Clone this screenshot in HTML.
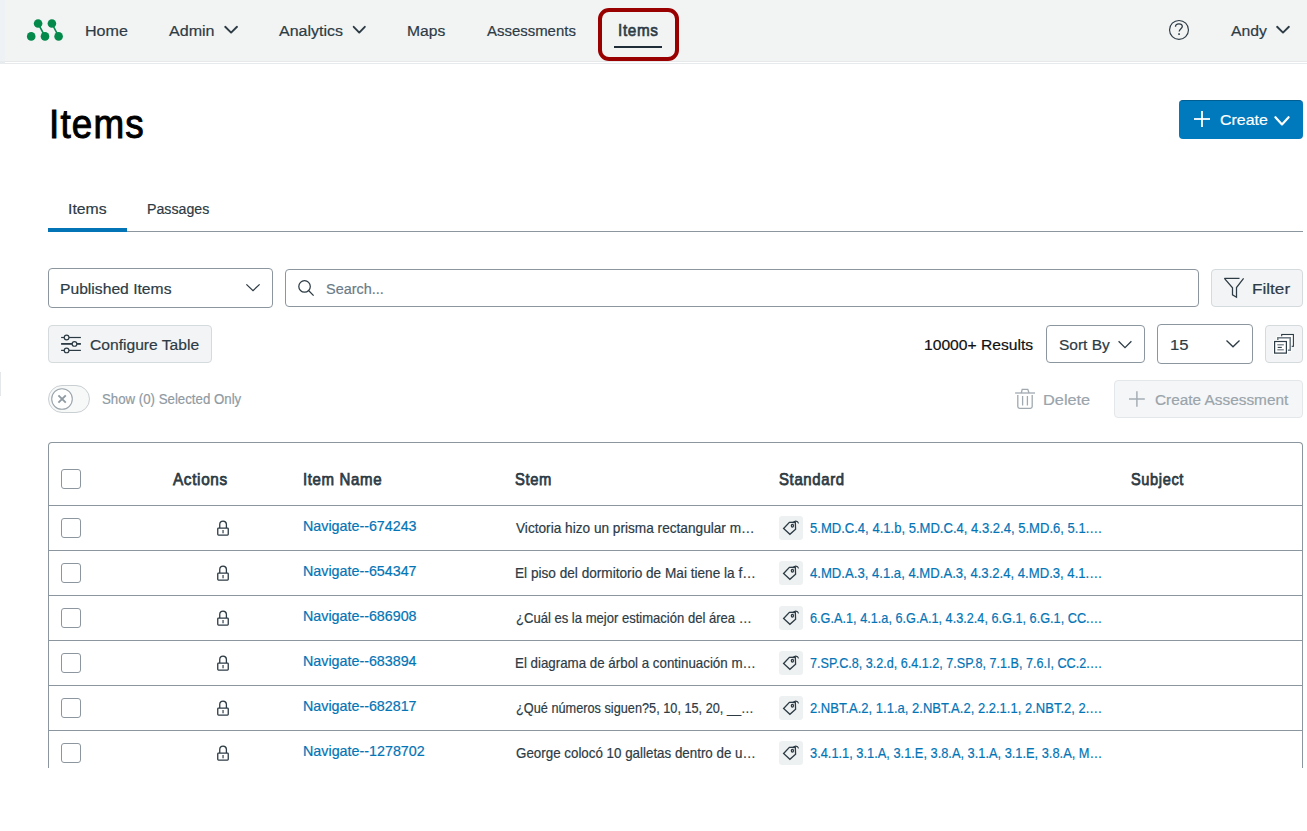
<!DOCTYPE html>
<html><head><meta charset="utf-8"><title>Items</title>
<style>
html,body{margin:0;padding:0;width:1307px;height:831px;overflow:hidden;background:#fff;}
body{position:relative;font-family:"Liberation Sans",sans-serif;}
.t{position:absolute;white-space:nowrap;line-height:1;transform-origin:0 0;font-family:"Liberation Sans",sans-serif;}
.r{position:absolute;box-sizing:border-box;}
svg.i{position:absolute;overflow:visible;}
</style></head><body>
<!-- header -->
<div class="r" style="left:0;top:0;width:1307px;height:61px;background:#f2f3f3"></div>
<div class="r" style="left:0;top:61px;width:1307px;height:1px;background:#e6e8ea"></div>
<div class="r" style="left:0;top:63px;width:1307px;height:1px;background:#e7eaed"></div>
<div class="r" style="left:0;top:0;width:5px;height:61px;background:#eef2f4"></div>
<div class="r" style="left:0;top:61px;width:5px;height:3px;background:#e8ecee"></div>
<svg class="i" style="left:0;top:0" width="70" height="60">
 <g fill="#038a4b" stroke="#038a4b" stroke-width="1.6">
  <line x1="38.1" y1="23.5" x2="45" y2="36.4"/><line x1="51.9" y1="23.5" x2="58.6" y2="36.4"/>
  <circle cx="31.2" cy="36.4" r="4.3" stroke="none"/><circle cx="38.1" cy="23.5" r="4.3" stroke="none"/>
  <circle cx="45" cy="36.4" r="4.3" stroke="none"/><circle cx="51.9" cy="23.5" r="4.3" stroke="none"/>
  <circle cx="58.6" cy="36.4" r="4.3" stroke="none"/>
 </g>
</svg>
<svg class="i" style="left:0;top:0" width="1307" height="60">
 <g fill="none" stroke="#2d3b45" stroke-width="1.9" stroke-linecap="round" stroke-linejoin="round">
  <polyline points="225.2,26.8 231.1,32.6 237,26.8"/>
  <polyline points="353.7,26.8 359.25,32.6 364.8,26.8"/>
  <polyline points="1277.1,26.8 1283,32.6 1288.9,26.8"/>
 </g>
 <g transform="translate(1165,16)" fill="none" stroke="#2d3b45">
  <circle cx="14" cy="13.9" r="9.45" stroke-width="1.15"/>
  <path d="M10.5,10.8 C10.5,8.9 12.1,7.9 13.9,7.9 C15.7,7.9 17.3,9 17.3,10.6 C17.3,12.5 14.2,13.1 14.2,15.6" stroke-width="1.3"/>
  <rect x="13.2" y="17.3" width="1.7" height="1.6" fill="#2d3b45" stroke="none"/>
 </g>
</svg>
<div class="r" style="left:598px;top:8px;width:81px;height:53px;border:4px solid #990000;border-radius:11px"></div>
<div class="r" style="left:614px;top:46px;width:48px;height:2px;background:#1f2d38"></div>

<!-- create button -->
<div class="r" style="left:1179px;top:100px;width:124px;height:39px;background:#0079bd;border-top:1px solid #005e92;border-radius:4px"></div>
<svg class="i" style="left:0;top:0" width="1307" height="140">
 <g fill="none" stroke="#fff" stroke-width="1.8">
  <line x1="1194" y1="119" x2="1210" y2="119"/><line x1="1202" y1="111" x2="1202" y2="127"/>
  <polyline points="1275.4,117.2 1282,124.4 1288.6,117.2" stroke-width="2.2" stroke-linecap="round" stroke-linejoin="round"/>
 </g>
</svg>

<!-- tabs -->
<div class="r" style="left:48px;top:231px;width:1255px;height:1px;background:#8b969e"></div>
<div class="r" style="left:48px;top:228px;width:79px;height:4px;background:#0374b5"></div>

<!-- controls row 1 -->
<div class="r" style="left:48px;top:268px;width:225px;height:40px;border:1px solid #8b969e;border-radius:4px;background:#fff"></div>
<div class="r" style="left:285px;top:269px;width:914px;height:38px;border:1px solid #8b969e;border-radius:4px;background:#fff"></div>
<div class="r" style="left:1211px;top:269px;width:92px;height:38px;border:1px solid #d5dadd;border-radius:4px;background:#f2f4f5"></div>
<svg class="i" style="left:0;top:0" width="1307" height="420">
 <g fill="none" stroke="#2d3b45" stroke-width="1.3">
  <polyline points="246.4,284.4 253,290.6 259.6,284.4"/>
 </g>
 <g fill="none" stroke="#2d3b45" stroke-width="1.25">
  <circle cx="304.55" cy="286.45" r="5.75"/>
  <line x1="308.8" y1="290.7" x2="313.6" y2="295.6"/>
  <polyline points="1224.4,278.4 1239.5,278.4"/>
  <polyline points="1224.4,278.4 1232.5,287.8 1232.5,294.9 1236.5,297.2 1236.5,287.5 1243.6,278.4" stroke-linejoin="miter"/>
 </g>
</svg>

<!-- controls row 2 -->
<div class="r" style="left:48px;top:325px;width:164px;height:38px;border:1px solid #d5dadd;border-radius:4px;background:#f2f4f5"></div>
<div class="r" style="left:1046px;top:325px;width:99px;height:38px;border:1px solid #8b969e;border-radius:4px;background:#fff"></div>
<div class="r" style="left:1157px;top:324px;width:96px;height:40px;border:1px solid #8b969e;border-radius:4px;background:#fff"></div>
<div class="r" style="left:1265px;top:325px;width:38px;height:38px;border:1px solid #d5dadd;border-radius:4px;background:#f2f4f5"></div>
<svg class="i" style="left:0;top:0" width="1307" height="420">
 <g fill="none" stroke="#2d3b45" stroke-width="1.3">
  <polyline points="1118.6,341.3 1125,347.6 1131.4,341.3"/>
  <polyline points="1226.5,340.5 1233,346.8 1239.5,340.5"/>
 </g>
 <g stroke="#2d3b45" stroke-width="1.2">
  <line x1="61.1" y1="337.5" x2="80.9" y2="337.5"/>
  <line x1="61.1" y1="343.9" x2="80.9" y2="343.9" stroke-width="1.8"/>
  <line x1="61.1" y1="350.4" x2="80.9" y2="350.4"/>
  <circle cx="66.6" cy="337.5" r="2.35" fill="#f2f4f5"/>
  <circle cx="74.5" cy="343.9" r="2.35" fill="#f2f4f5"/>
  <circle cx="66.6" cy="350.4" r="2.35" fill="#f2f4f5"/>
 </g>
 <g transform="translate(1266,326)">
  <rect x="15.7" y="8.5" width="11.7" height="11.8" fill="#fff" stroke="#2d3b45" stroke-width="1.1"/>
  <rect x="11.8" y="11.8" width="12.4" height="12.4" fill="#fff" stroke="#fff" stroke-width="3"/>
  <rect x="11.8" y="11.8" width="12.4" height="12.4" fill="#fff" stroke="#6b7780" stroke-width="1.5"/>
  <rect x="8.6" y="15.5" width="11.8" height="11.6" fill="#fff" stroke="#fff" stroke-width="3"/>
  <rect x="8.6" y="15.5" width="11.8" height="11.6" fill="#fff" stroke="#2d3b45" stroke-width="1.2"/>
  <line x1="11.3" y1="18.8" x2="17.8" y2="18.8" stroke="#6b7780" stroke-width="1.2"/>
  <line x1="11.7" y1="21.4" x2="15.8" y2="21.4" stroke="#2d3b45" stroke-width="1.1"/>
  <line x1="11.3" y1="23.8" x2="17.8" y2="23.8" stroke="#6b7780" stroke-width="1.2"/>
 </g>
</svg>

<!-- toggle + delete row -->
<div class="r" style="left:0;top:372px;width:1px;height:24px;background:#e4e8eb"></div>
<div class="r" style="left:48px;top:385px;width:42px;height:28px;border:1px solid #c9cfd3;border-radius:14px;background:#f7f8f8"></div>
<svg class="i" style="left:0;top:0" width="1307" height="420">
 <circle cx="62" cy="399" r="10.3" fill="#fff" stroke="#9aa4ab" stroke-width="1.1"/>
 <g stroke="#8f9aa2" stroke-width="1.9"><line x1="58.4" y1="395.4" x2="65.8" y2="402.6"/><line x1="65.8" y1="395.4" x2="58.4" y2="402.6"/></g>
 <g transform="translate(1008,382)" fill="none" stroke="#a0a9b0" stroke-width="1.3">
  <line x1="7.1" y1="11" x2="27" y2="11"/>
  <polyline points="13.3,11 14.2,7.4 19.8,7.4 21,11"/>
  <path d="M9.8,13.1 V24.5 Q9.8,26.3 11.6,26.3 H22.4 Q24.2,26.3 24.2,24.5 V13.1"/>
  <line x1="14.6" y1="14" x2="14.6" y2="23.5"/><line x1="19.4" y1="14" x2="19.4" y2="23.5"/>
 </g>
</svg>
<div class="r" style="left:1114px;top:380px;width:189px;height:38px;border:1px solid #e3e7e9;border-radius:4px;background:#f5f6f7"></div>
<svg class="i" style="left:0;top:0" width="1307" height="420">
 <g stroke="#a5aeb4" stroke-width="1.5"><line x1="1129" y1="399" x2="1144.8" y2="399"/><line x1="1136.9" y1="391.2" x2="1136.9" y2="406.7"/></g>
</svg>

<!-- table -->
<div class="r" style="left:48px;top:442px;width:1255px;height:326px;border:1px solid #8b969e;border-bottom:none;border-radius:4px 4px 0 0;background:#fff"></div>
<div class="r" style="left:48px;top:505px;width:1255px;height:1px;background:#8b969e"></div>
<div class="r" style="left:48px;top:550px;width:1255px;height:1px;background:#8b969e"></div>
<div class="r" style="left:48px;top:595px;width:1255px;height:1px;background:#8b969e"></div>
<div class="r" style="left:48px;top:640px;width:1255px;height:1px;background:#8b969e"></div>
<div class="r" style="left:48px;top:685px;width:1255px;height:1px;background:#8b969e"></div>
<div class="r" style="left:48px;top:730px;width:1255px;height:1px;background:#8b969e"></div>
<div class="r" style="left:61px;top:469px;width:20px;height:20px;border:1px solid #8b969e;border-radius:3px;background:#fff"></div>
<div class="r" style="left:61px;top:518px;width:20px;height:20px;border:1px solid #8b969e;border-radius:3px;background:#fff"></div>
<div class="r" style="left:779px;top:516px;width:24px;height:24px;border-radius:3px;background:#eef1f2"></div>
<svg class="i" style="left:210px;top:515px" width="26" height="26"><g fill="none" stroke="#2d3b45" stroke-width="1.3"><rect x="7.75" y="13.05" width="10.5" height="7.1" rx="0.8"/><path d="M9.75,13.05 V9.2 A3.33,3.33 0 0 1 16.4,9.2 V13.05"/></g><rect x="12.3" y="15" width="1.5" height="3.3" fill="#5b6770"/></svg>
<svg class="i" style="left:776px;top:513px" width="30" height="30"><g fill="none" stroke="#2d3b45" stroke-width="1.3" stroke-linejoin="miter"><path d="M7.6,15.5 L13.4,9.3 L19.3,9.1 L19.6,16.3 L13.9,21.3 Z"/><ellipse cx="16.4" cy="12.8" rx="1.05" ry="1.4"/><path d="M17.2,10.2 C17.6,7.6 21.6,7.2 22.6,10.3" stroke-width="1.1"/></g></svg>
<div class="r" style="left:61px;top:563px;width:20px;height:20px;border:1px solid #8b969e;border-radius:3px;background:#fff"></div>
<div class="r" style="left:779px;top:561px;width:24px;height:24px;border-radius:3px;background:#eef1f2"></div>
<svg class="i" style="left:210px;top:560px" width="26" height="26"><g fill="none" stroke="#2d3b45" stroke-width="1.3"><rect x="7.75" y="13.05" width="10.5" height="7.1" rx="0.8"/><path d="M9.75,13.05 V9.2 A3.33,3.33 0 0 1 16.4,9.2 V13.05"/></g><rect x="12.3" y="15" width="1.5" height="3.3" fill="#5b6770"/></svg>
<svg class="i" style="left:776px;top:558px" width="30" height="30"><g fill="none" stroke="#2d3b45" stroke-width="1.3" stroke-linejoin="miter"><path d="M7.6,15.5 L13.4,9.3 L19.3,9.1 L19.6,16.3 L13.9,21.3 Z"/><ellipse cx="16.4" cy="12.8" rx="1.05" ry="1.4"/><path d="M17.2,10.2 C17.6,7.6 21.6,7.2 22.6,10.3" stroke-width="1.1"/></g></svg>
<div class="r" style="left:61px;top:608px;width:20px;height:20px;border:1px solid #8b969e;border-radius:3px;background:#fff"></div>
<div class="r" style="left:779px;top:606px;width:24px;height:24px;border-radius:3px;background:#eef1f2"></div>
<svg class="i" style="left:210px;top:605px" width="26" height="26"><g fill="none" stroke="#2d3b45" stroke-width="1.3"><rect x="7.75" y="13.05" width="10.5" height="7.1" rx="0.8"/><path d="M9.75,13.05 V9.2 A3.33,3.33 0 0 1 16.4,9.2 V13.05"/></g><rect x="12.3" y="15" width="1.5" height="3.3" fill="#5b6770"/></svg>
<svg class="i" style="left:776px;top:603px" width="30" height="30"><g fill="none" stroke="#2d3b45" stroke-width="1.3" stroke-linejoin="miter"><path d="M7.6,15.5 L13.4,9.3 L19.3,9.1 L19.6,16.3 L13.9,21.3 Z"/><ellipse cx="16.4" cy="12.8" rx="1.05" ry="1.4"/><path d="M17.2,10.2 C17.6,7.6 21.6,7.2 22.6,10.3" stroke-width="1.1"/></g></svg>
<div class="r" style="left:61px;top:653px;width:20px;height:20px;border:1px solid #8b969e;border-radius:3px;background:#fff"></div>
<div class="r" style="left:779px;top:651px;width:24px;height:24px;border-radius:3px;background:#eef1f2"></div>
<svg class="i" style="left:210px;top:650px" width="26" height="26"><g fill="none" stroke="#2d3b45" stroke-width="1.3"><rect x="7.75" y="13.05" width="10.5" height="7.1" rx="0.8"/><path d="M9.75,13.05 V9.2 A3.33,3.33 0 0 1 16.4,9.2 V13.05"/></g><rect x="12.3" y="15" width="1.5" height="3.3" fill="#5b6770"/></svg>
<svg class="i" style="left:776px;top:648px" width="30" height="30"><g fill="none" stroke="#2d3b45" stroke-width="1.3" stroke-linejoin="miter"><path d="M7.6,15.5 L13.4,9.3 L19.3,9.1 L19.6,16.3 L13.9,21.3 Z"/><ellipse cx="16.4" cy="12.8" rx="1.05" ry="1.4"/><path d="M17.2,10.2 C17.6,7.6 21.6,7.2 22.6,10.3" stroke-width="1.1"/></g></svg>
<div class="r" style="left:61px;top:698px;width:20px;height:20px;border:1px solid #8b969e;border-radius:3px;background:#fff"></div>
<div class="r" style="left:779px;top:696px;width:24px;height:24px;border-radius:3px;background:#eef1f2"></div>
<svg class="i" style="left:210px;top:695px" width="26" height="26"><g fill="none" stroke="#2d3b45" stroke-width="1.3"><rect x="7.75" y="13.05" width="10.5" height="7.1" rx="0.8"/><path d="M9.75,13.05 V9.2 A3.33,3.33 0 0 1 16.4,9.2 V13.05"/></g><rect x="12.3" y="15" width="1.5" height="3.3" fill="#5b6770"/></svg>
<svg class="i" style="left:776px;top:693px" width="30" height="30"><g fill="none" stroke="#2d3b45" stroke-width="1.3" stroke-linejoin="miter"><path d="M7.6,15.5 L13.4,9.3 L19.3,9.1 L19.6,16.3 L13.9,21.3 Z"/><ellipse cx="16.4" cy="12.8" rx="1.05" ry="1.4"/><path d="M17.2,10.2 C17.6,7.6 21.6,7.2 22.6,10.3" stroke-width="1.1"/></g></svg>
<div class="r" style="left:61px;top:743px;width:20px;height:20px;border:1px solid #8b969e;border-radius:3px;background:#fff"></div>
<div class="r" style="left:779px;top:741px;width:24px;height:24px;border-radius:3px;background:#eef1f2"></div>
<svg class="i" style="left:210px;top:740px" width="26" height="26"><g fill="none" stroke="#2d3b45" stroke-width="1.3"><rect x="7.75" y="13.05" width="10.5" height="7.1" rx="0.8"/><path d="M9.75,13.05 V9.2 A3.33,3.33 0 0 1 16.4,9.2 V13.05"/></g><rect x="12.3" y="15" width="1.5" height="3.3" fill="#5b6770"/></svg>
<svg class="i" style="left:776px;top:738px" width="30" height="30"><g fill="none" stroke="#2d3b45" stroke-width="1.3" stroke-linejoin="miter"><path d="M7.6,15.5 L13.4,9.3 L19.3,9.1 L19.6,16.3 L13.9,21.3 Z"/><ellipse cx="16.4" cy="12.8" rx="1.05" ry="1.4"/><path d="M17.2,10.2 C17.6,7.6 21.6,7.2 22.6,10.3" stroke-width="1.1"/></g></svg>

<span class="t" style="left:85.06px;top:23.0px;font-size:15.5px;font-weight:400;color:#2d3b45;transform:scaleX(1.0371);-webkit-text-stroke:0.2px #2d3b45;">Home</span>
<span class="t" style="left:169.30px;top:23.0px;font-size:15.5px;font-weight:400;color:#2d3b45;transform:scaleX(1.0366);-webkit-text-stroke:0.2px #2d3b45;">Admin</span>
<span class="t" style="left:279.00px;top:23.0px;font-size:15.5px;font-weight:400;color:#2d3b45;transform:scaleX(1.0309);-webkit-text-stroke:0.2px #2d3b45;">Analytics</span>
<span class="t" style="left:406.59px;top:23.0px;font-size:15.5px;font-weight:400;color:#2d3b45;transform:scaleX(1.0094);-webkit-text-stroke:0.2px #2d3b45;">Maps</span>
<span class="t" style="left:487.20px;top:23.0px;font-size:15.5px;font-weight:400;color:#2d3b45;transform:scaleX(0.9641);-webkit-text-stroke:0.2px #2d3b45;">Assessments</span>
<span class="t" style="left:617.6px;top:22.1px;font-size:17px;font-weight:400;color:#2d3b45;transform:scaleX(0.9);letter-spacing:0.7px;-webkit-text-stroke:0.65px #2d3b45;">Items</span>
<span class="t" style="left:1230.70px;top:22.8px;font-size:15.5px;font-weight:400;color:#2d3b45;transform:scaleX(1.0175);-webkit-text-stroke:0.2px #2d3b45;">Andy</span>
<span class="t" style="left:49.1px;top:104.0px;font-size:40px;font-weight:400;color:#000;transform:scaleX(0.92);letter-spacing:1.3px;-webkit-text-stroke:1.0px #000;">Items</span>
<span class="t" style="left:1220.30px;top:111.9px;font-size:15.5px;font-weight:400;color:#fff;transform:scaleX(1.0283);-webkit-text-stroke:0.2px #fff;">Create</span>
<span class="t" style="left:68.08px;top:201.0px;font-size:15.5px;font-weight:400;color:#2d3b45;transform:scaleX(1.0176);-webkit-text-stroke:0.2px #2d3b45;">Items</span>
<span class="t" style="left:147.38px;top:201.0px;font-size:15.5px;font-weight:400;color:#2d3b45;transform:scaleX(0.9150);-webkit-text-stroke:0.2px #2d3b45;">Passages</span>
<span class="t" style="left:60.49px;top:280.8px;font-size:15.5px;font-weight:400;color:#2d3b45;transform:scaleX(1.0107);-webkit-text-stroke:0.2px #2d3b45;">Published Items</span>
<span class="t" style="left:326.40px;top:280.9px;font-size:15.5px;font-weight:400;color:#6b7b88;transform:scaleX(0.9321);-webkit-text-stroke:0.2px #6b7b88;">Search...</span>
<span class="t" style="left:1251.59px;top:280.8px;font-size:15.5px;font-weight:400;color:#2d3b45;transform:scaleX(1.1057);-webkit-text-stroke:0.2px #2d3b45;">Filter</span>
<span class="t" style="left:89.60px;top:337.0px;font-size:15.5px;font-weight:400;color:#2d3b45;transform:scaleX(1.0079);-webkit-text-stroke:0.2px #2d3b45;">Configure Table</span>
<span class="t" style="left:923.69px;top:336.9px;font-size:15.5px;font-weight:400;color:#111;transform:scaleX(1.0094);-webkit-text-stroke:0.2px #111;">10000+ Results</span>
<span class="t" style="left:1059.00px;top:337.0px;font-size:15.5px;font-weight:400;color:#2d3b45;-webkit-text-stroke:0.2px #2d3b45;">Sort By</span>
<span class="t" style="left:1170.32px;top:337.2px;font-size:15.5px;font-weight:400;color:#2d3b45;transform:scaleX(1.0755);-webkit-text-stroke:0.2px #2d3b45;">15</span>
<span class="t" style="left:102.40px;top:391.8px;font-size:14.5px;font-weight:400;color:#8f9aa2;transform:scaleX(0.9140);-webkit-text-stroke:0.2px #8f9aa2;">Show (0) Selected Only</span>
<span class="t" style="left:1042.75px;top:392.0px;font-size:15.5px;font-weight:400;color:#9aa4ab;transform:scaleX(1.0536);-webkit-text-stroke:0.2px #9aa4ab;">Delete</span>
<span class="t" style="left:1155.00px;top:392.0px;font-size:15.5px;font-weight:400;color:#9aa4ab;transform:scaleX(0.9916);-webkit-text-stroke:0.2px #9aa4ab;">Create Assessment</span>
<span class="t" style="left:173.10px;top:471.0px;font-size:16.5px;font-weight:400;color:#2d3b45;transform:scaleX(0.9284);letter-spacing:0.7px;-webkit-text-stroke:0.75px #2d3b45;">Actions</span>
<span class="t" style="left:303.19px;top:471.0px;font-size:16.5px;font-weight:400;color:#2d3b45;transform:scaleX(0.9106);letter-spacing:0.7px;-webkit-text-stroke:0.75px #2d3b45;">Item Name</span>
<span class="t" style="left:515.40px;top:471.0px;font-size:16.5px;font-weight:400;color:#2d3b45;transform:scaleX(0.8955);letter-spacing:0.7px;-webkit-text-stroke:0.75px #2d3b45;">Stem</span>
<span class="t" style="left:779.20px;top:471.0px;font-size:16.5px;font-weight:400;color:#2d3b45;transform:scaleX(0.9053);letter-spacing:0.7px;-webkit-text-stroke:0.75px #2d3b45;">Standard</span>
<span class="t" style="left:1131.20px;top:471.0px;font-size:16.5px;font-weight:400;color:#2d3b45;transform:scaleX(0.8835);letter-spacing:0.7px;-webkit-text-stroke:0.75px #2d3b45;">Subject</span>
<span class="t" style="left:302.81px;top:518.8px;font-size:14.5px;font-weight:400;color:#0374b5;transform:scaleX(0.9851);-webkit-text-stroke:0.2px #0374b5;">Navigate--674243</span>
<span class="t" style="left:515.50px;top:520.7px;font-size:14.5px;font-weight:400;color:#2d3b45;transform:scaleX(0.9413);-webkit-text-stroke:0.2px #2d3b45;">Victoria hizo un prisma rectangular m…</span>
<span class="t" style="left:809.80px;top:520.5px;font-size:14.5px;font-weight:400;color:#0374b5;transform:scaleX(0.9002);-webkit-text-stroke:0.2px #0374b5;">5.MD.C.4, 4.1.b, 5.MD.C.4, 4.3.2.4, 5.MD.6, 5.1.…</span>
<span class="t" style="left:302.81px;top:563.8px;font-size:14.5px;font-weight:400;color:#0374b5;transform:scaleX(0.9851);-webkit-text-stroke:0.2px #0374b5;">Navigate--654347</span>
<span class="t" style="left:514.56px;top:565.7px;font-size:14.5px;font-weight:400;color:#2d3b45;transform:scaleX(0.9398);-webkit-text-stroke:0.2px #2d3b45;">El piso del dormitorio de Mai tiene la f…</span>
<span class="t" style="left:809.80px;top:565.5px;font-size:14.5px;font-weight:400;color:#0374b5;transform:scaleX(0.9047);-webkit-text-stroke:0.2px #0374b5;">4.MD.A.3, 4.1.a, 4.MD.A.3, 4.3.2.4, 4.MD.3, 4.1.…</span>
<span class="t" style="left:302.81px;top:608.8px;font-size:14.5px;font-weight:400;color:#0374b5;transform:scaleX(0.9851);-webkit-text-stroke:0.2px #0374b5;">Navigate--686908</span>
<span class="t" style="left:515.50px;top:610.7px;font-size:14.5px;font-weight:400;color:#2d3b45;transform:scaleX(0.9001);-webkit-text-stroke:0.2px #2d3b45;">¿Cuál es la mejor estimación del área …</span>
<span class="t" style="left:809.80px;top:610.5px;font-size:14.5px;font-weight:400;color:#0374b5;transform:scaleX(0.8761);-webkit-text-stroke:0.2px #0374b5;">6.G.A.1, 4.1.a, 6.G.A.1, 4.3.2.4, 6.G.1, 6.G.1, CC.…</span>
<span class="t" style="left:302.81px;top:653.8px;font-size:14.5px;font-weight:400;color:#0374b5;transform:scaleX(0.9851);-webkit-text-stroke:0.2px #0374b5;">Navigate--683894</span>
<span class="t" style="left:514.58px;top:655.7px;font-size:14.5px;font-weight:400;color:#2d3b45;transform:scaleX(0.9193);-webkit-text-stroke:0.2px #2d3b45;">El diagrama de árbol a continuación m…</span>
<span class="t" style="left:809.80px;top:655.5px;font-size:14.5px;font-weight:400;color:#0374b5;transform:scaleX(0.8689);-webkit-text-stroke:0.2px #0374b5;">7.SP.C.8, 3.2.d, 6.4.1.2, 7.SP.8, 7.1.B, 7.6.I, CC.2.…</span>
<span class="t" style="left:302.81px;top:698.8px;font-size:14.5px;font-weight:400;color:#0374b5;transform:scaleX(0.9851);-webkit-text-stroke:0.2px #0374b5;">Navigate--682817</span>
<span class="t" style="left:515.50px;top:700.7px;font-size:14.5px;font-weight:400;color:#2d3b45;transform:scaleX(0.8781);-webkit-text-stroke:0.2px #2d3b45;">¿Qué números siguen?5, 10, 15, 20, __…</span>
<span class="t" style="left:809.80px;top:700.5px;font-size:14.5px;font-weight:400;color:#0374b5;transform:scaleX(0.8979);-webkit-text-stroke:0.2px #0374b5;">2.NBT.A.2, 1.1.a, 2.NBT.A.2, 2.2.1.1, 2.NBT.2, 2.…</span>
<span class="t" style="left:302.81px;top:743.8px;font-size:14.5px;font-weight:400;color:#0374b5;transform:scaleX(0.9872);-webkit-text-stroke:0.2px #0374b5;">Navigate--1278702</span>
<span class="t" style="left:515.50px;top:745.7px;font-size:14.5px;font-weight:400;color:#2d3b45;transform:scaleX(0.9213);-webkit-text-stroke:0.2px #2d3b45;">George colocó 10 galletas dentro de u…</span>
<span class="t" style="left:809.80px;top:745.5px;font-size:14.5px;font-weight:400;color:#0374b5;transform:scaleX(0.8846);-webkit-text-stroke:0.2px #0374b5;">3.4.1.1, 3.1.A, 3.1.E, 3.8.A, 3.1.A, 3.1.E, 3.8.A, M…</span>
</body></html>
